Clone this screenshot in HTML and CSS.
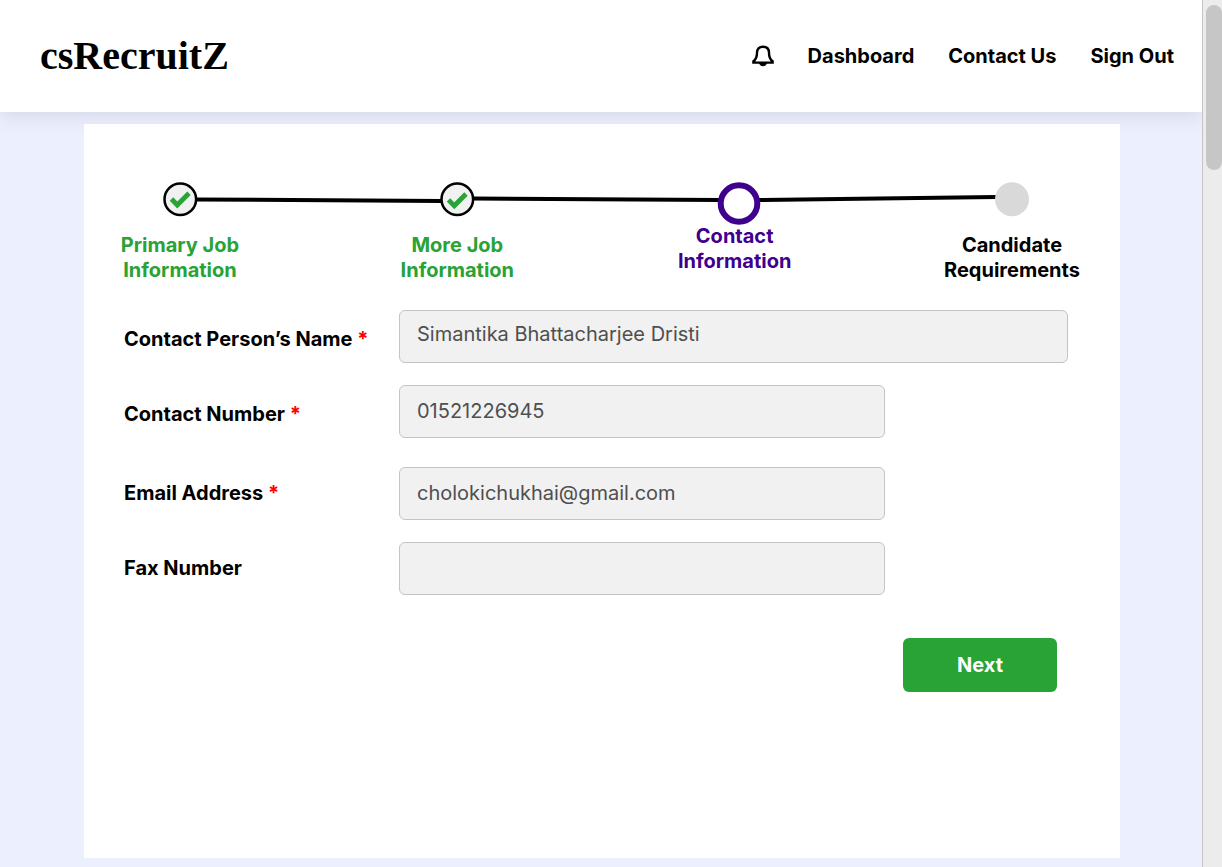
FILE: index.html
```html
<!DOCTYPE html>
<html lang="en">
<head>
<meta charset="utf-8">
<meta name="viewport" content="width=device-width, initial-scale=1">
<title>csRecruitZ</title>
<link rel="stylesheet" href="styles.css">
</head>
<body>
<div class="shell">
  <div class="page">
    <header class="topbar">
      <a class="logo" href="#">csRecruitZ</a>
      <nav class="nav">
        <button class="bell" type="button" aria-label="Notifications">
          <svg width="22" height="24" viewBox="0 0 22 24" fill="none" stroke="#000" stroke-width="2.400">
            <path d="M11 2.700C7 2.700 5 5.300 5 8.700c0 4.300-.8 6.600-3.600 8.600v1.300h19.200v-1.300c-2.800-2-3.600-4.300-3.600-8.600C17 5.300 15 2.700 11 2.700Z"/>
            <path d="M7.500 19.500a3.600 3 0 0 0 7 0Z" fill="#000" stroke-width="1"/>
          </svg>
        </button>
        <a href="#">Dashboard</a>
        <a href="#">Contact Us</a>
        <a href="#">Sign Out</a>
      </nav>
    </header>
    <main class="card">
      <div class="stepper">
        <svg class="track" viewBox="0 0 972 42" preserveAspectRatio="none" fill="none" stroke="#000" stroke-width="4" aria-hidden="true">
          <path d="M86 17.500 332 19M363 16.500 610 18M648 18 886 15"/>
        </svg>
        <ol class="steps">
          <li class="step done">
            <svg width="34" height="34" viewBox="0 0 34 34"><circle cx="17.300" cy="17.300" r="15.800" fill="#f1f1f1" stroke="#000" stroke-width="2.500"/><path d="m8.500 17 5.800 6L26 11.300" fill="none" stroke="#29a236" stroke-width="4.800"/></svg>
            <span>Primary Job Information</span>
          </li>
          <li class="step done">
            <svg width="34" height="34" viewBox="0 0 34 34"><circle cx="17.300" cy="17.300" r="15.800" fill="#f1f1f1" stroke="#000" stroke-width="2.500"/><path d="m8.500 17.800 5.800 6L26 12" fill="none" stroke="#29a236" stroke-width="4.800"/></svg>
            <span>More Job Information</span>
          </li>
          <li class="step current" aria-current="step">
            <svg width="50" height="42" viewBox="0 0 50 42"><circle cx="29" cy="21.500" r="18.300" fill="#fff" stroke="#3f008d" stroke-width="6"/></svg>
            <span>Contact Information</span>
          </li>
          <li class="step">
            <svg width="34" height="34" viewBox="0 0 34 34"><circle cx="17" cy="17.300" r="17" fill="#d9d9d9"/></svg>
            <span>Candidate Requirements</span>
          </li>
        </ol>
      </div>
      <form class="form">
        <div class="group phone-group">
          <label for="person">Contact Person’s Name <span class="req">*</span></label>
          <input class="field wide" id="person" type="text" value="Simantika Bhattacharjee Dristi">
          <label for="phone">Contact Number <span class="req">*</span></label>
          <input class="field" id="phone" type="tel" value="01521226945">
        </div>
        <div class="group">
          <label for="email">Email Address <span class="req">*</span></label>
          <input class="field" id="email" type="email" value="cholokichukhai@gmail.com">
          <label for="fax">Fax Number</label>
          <input class="field" id="fax" type="tel">
        </div>
        <button class="next" type="button">Next</button>
      </form>
    </main>
  </div>
  <div class="scrollbar" aria-hidden="true"><div class="thumb"></div></div>
</div>
</body>
</html>
```
FILE: styles.css
```css
* { box-sizing: border-box; }

body {
  margin: 0;
  font-family: Inter, "Liberation Sans", sans-serif;
  font-size: 20px;
  font-weight: 700;
  line-height: 25px;
  color: #000;
}

.shell {
  display: flex;
  min-height: 100vh;
}

.page {
  flex: 1;
  min-width: 0;
  display: flex;
  flex-direction: column;
  background: #ebeffe;
}

.topbar {
  display: flex;
  align-items: center;
  justify-content: space-between;
  height: 112px;
  padding: 0 28px 0 40px;
  background: #fff;
  box-shadow: 0 4px 20px rgba(0, 0, 0, 0.1);
}

.logo {
  font-family: "Liberation Serif", serif;
  font-size: 40px;
  line-height: 48px;
  color: #000;
  text-decoration: none;
}

.nav {
  display: flex;
  align-items: center;
  gap: 34px;
}

.nav a {
  color: #000;
  text-decoration: none;
}

.bell {
  display: flex;
  padding: 0;
  border: 0;
  background: none;
}

.card {
  position: relative;
  flex: 1;
  margin: 12px 82px 9px 84px;
  padding-top: 58px;
  background: #fff;
}

.stepper {
  display: grid;
  margin: 0 38px 0 26px;
}

.track {
  grid-area: 1 / 1;
  width: 100%;
  height: 42px;
}

.steps {
  grid-area: 1 / 1;
  display: flex;
  justify-content: space-between;
  margin: 0;
  padding: 0;
  list-style: none;
}

.step {
  display: flex;
  flex-direction: column;
  align-items: center;
  gap: 17px;
  width: 140px;
  text-align: center;
}

.step svg {
  display: block;
  overflow: visible;
}

.done { color: #29a236; }

.current {
  gap: 0;
  color: #3f008d;
}

.form {
  display: flex;
  flex-direction: column;
  gap: 29px;
  padding: 27px 52px 40px 40px;
}

.group {
  display: grid;
  grid-template-columns: 275px 1fr;
  align-items: center;
  row-gap: 22px;
}

.phone-group label { padding-top: 6px; }

.req { color: #f00; }

.field {
  width: 486px;
  max-width: 100%;
  height: 53px;
  padding: 0 17px 2px;
  border: 1px solid #c4c4c4;
  border-radius: 6px;
  background: #f1f1f1;
  color: #4f4f4f;
  font: inherit;
  font-weight: 400;
}

.wide {
  width: 100%;
  padding-bottom: 6px;
}

.next {
  align-self: flex-end;
  width: 154px;
  height: 54px;
  margin: 14px 11px 0 0;
  border: 0;
  border-radius: 6px;
  background: #29a236;
  color: #fff;
  font: inherit;
}

.scrollbar {
  width: 20px;
  padding: 5px 0 0 3px;
  border-left: 1px solid #c4c4c4;
  background: #ececec;
}

.thumb {
  height: 165px;
  border-radius: 8px;
  background: #c6c6c6;
}
```
